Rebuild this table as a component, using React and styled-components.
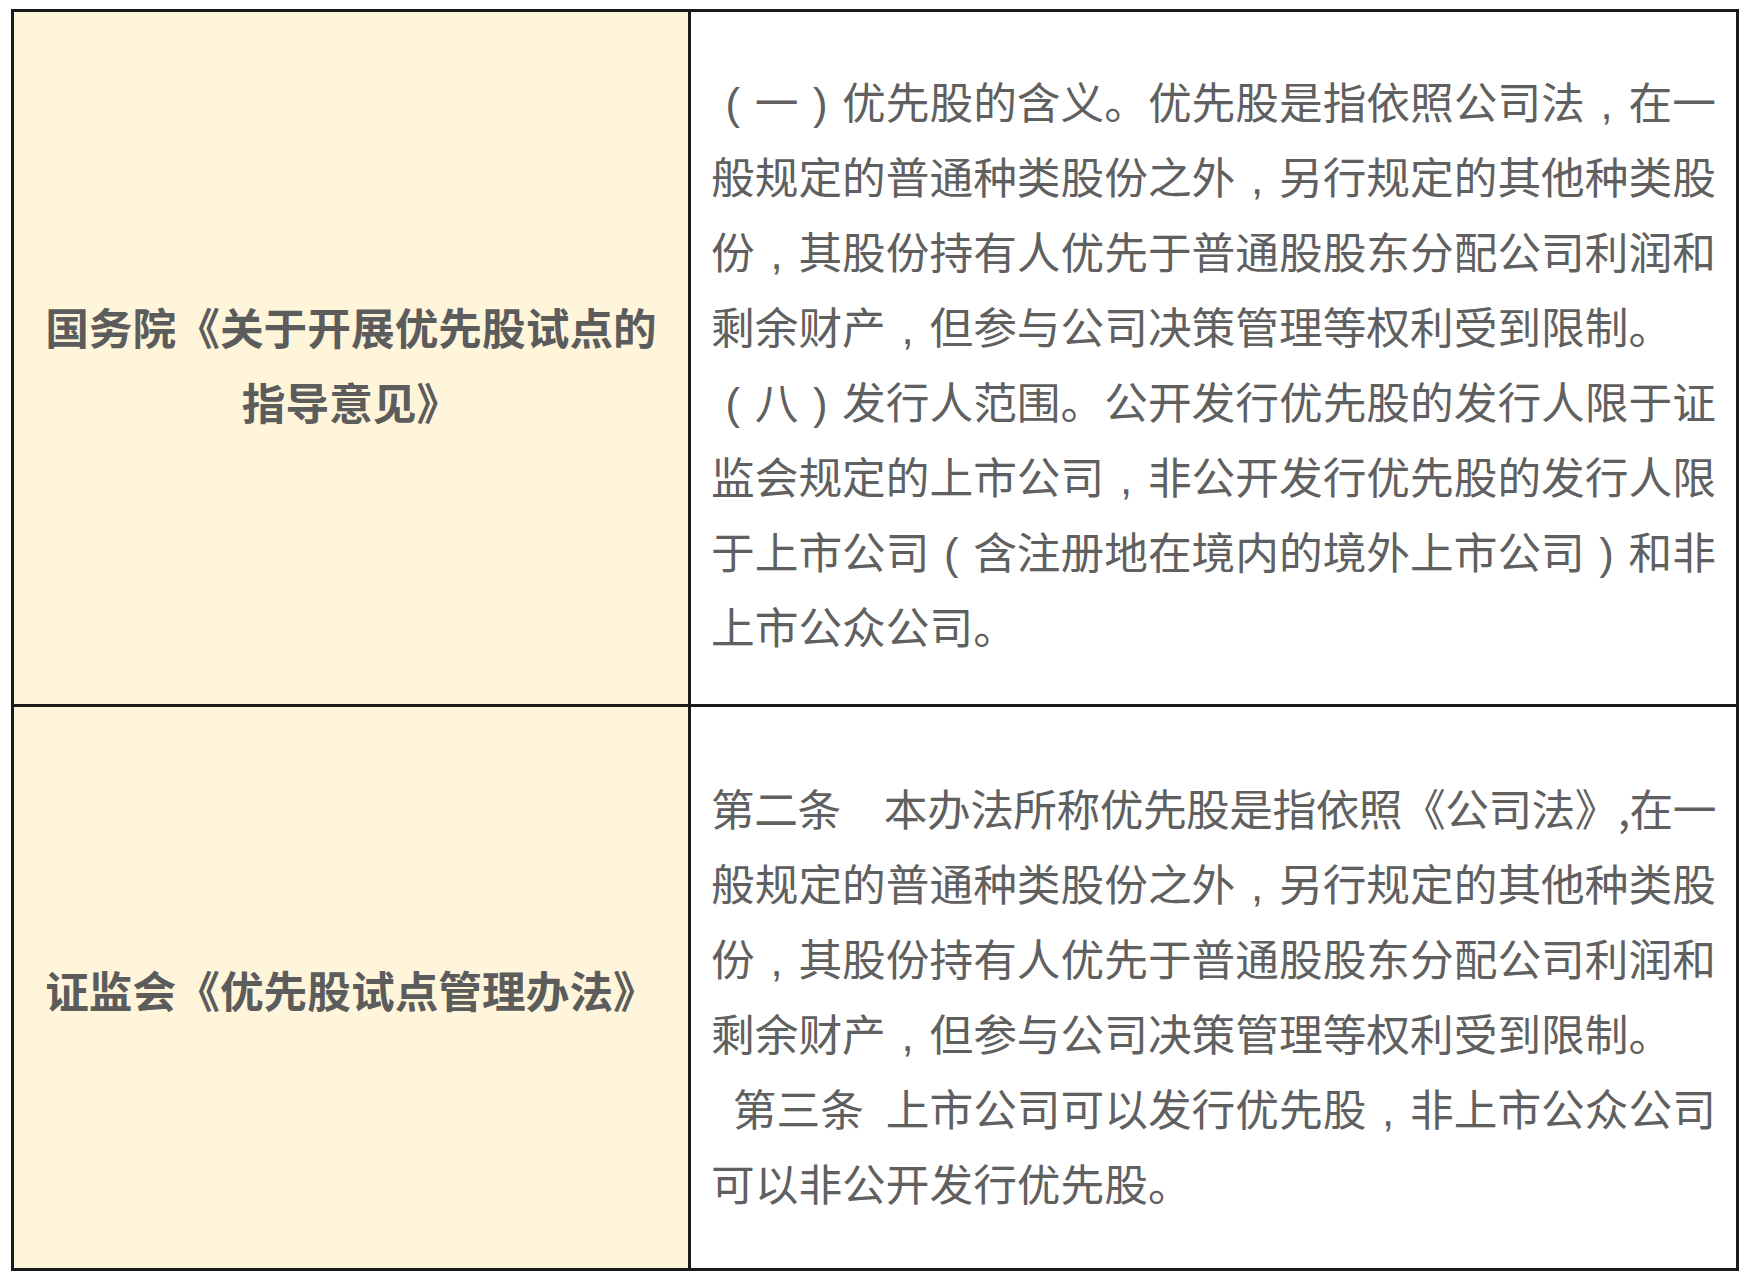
import React from 'react'
import styled, { createGlobalStyle } from 'styled-components'

const GlobalStyle = createGlobalStyle`
    html, body {
        margin: 0;
        padding: 0;
        background: #ffffff;
    }
    body {
        font-family: "Noto Sans CJK SC", "Noto Sans", sans-serif;
    }
`

const Page = styled.div`
    padding: 9px 0 0 11px;
`

const Table = styled.div`
    display: grid;
    grid-template-columns: 674px 1045px;
    grid-template-rows: 692px 561px;
    gap: 3px;
    padding: 3px;
    width: max-content;
    background: #1b1b1b;
`

const HeadCell = styled.div`
    display: flex;
    flex-direction: column;
    align-items: center;
    justify-content: center;
    padding-top: ${props => props.$offset}px;
    background: #fff5da;
    color: #5c5c5c;
    font-size: 43.7px;
    font-weight: 700;
    line-height: 75px;
    text-align: center;
`

const TextCell = styled.div`
    display: flex;
    flex-direction: column;
    justify-content: center;
    padding: ${props => props.$offset}px 0 0 20px;
    background: #ffffff;
    color: #606060;
    font-size: 43.7px;
    font-weight: 400;
    line-height: 75px;
`

const Line = styled.div`
    height: 75px;
    white-space: pre;
    letter-spacing: ${props => props.$tight ? '-0.5px' : '0'};
`

// full-width comma and brackets sit in the middle of their cell
const Punct = styled.span`
    display: inline-block;
    width: 1em;
    line-height: 0;
    text-align: center;
    font-family: "Liberation Sans", "Noto Sans", sans-serif;
    font-weight: 400;
`

const punctMap = { '，': ',', '（': '(', '）': ')' }

function renderLine(text) {
    return text.split(/([，（）])/).map((part, i) =>
        punctMap[part] ? <Punct key={i}>{punctMap[part]}</Punct> : part
    )
}

const rows = [
    {
        head: ['国务院《关于开展优先股试点的', '指导意见》'],
        headOffset: 12,
        textOffset: 9,
        lines: [
            '（一）优先股的含义。优先股是指依照公司法，在一',
            '般规定的普通种类股份之外，另行规定的其他种类股',
            '份，其股份持有人优先于普通股股东分配公司利润和',
            '剩余财产，但参与公司决策管理等权利受到限制。',
            '（八）发行人范围。公开发行优先股的发行人限于证',
            '监会规定的上市公司，非公开发行优先股的发行人限',
            '于上市公司（含注册地在境内的境外上市公司）和非',
            '上市公众公司。',
        ],
    },
    {
        head: ['证监会《优先股试点管理办法》'],
        headOffset: 3,
        textOffset: 14,
        lines: [
            '第二条\u3000本办法所称优先股是指依照《公司法》,在一',
            '般规定的普通种类股份之外，另行规定的其他种类股',
            '份，其股份持有人优先于普通股股东分配公司利润和',
            '剩余财产，但参与公司决策管理等权利受到限制。',
            '\u2002第三条\u2002上市公司可以发行优先股，非上市公众公司',
            '可以非公开发行优先股。',
        ],
    },
]

function App() {
    return (
        <Page>
            <GlobalStyle />
            <Table>
                {rows.map((row, i) => (
                    <React.Fragment key={i}>
                        <HeadCell $offset={row.headOffset}>
                            {row.head.map((h, j) => (
                                <Line key={j}>{h}</Line>
                            ))}
                        </HeadCell>
                        <TextCell $offset={row.textOffset}>
                            {row.lines.map((l, j) => (
                                <Line key={j} $tight={l.includes('》,')}>
                                    {renderLine(l)}
                                </Line>
                            ))}
                        </TextCell>
                    </React.Fragment>
                ))}
            </Table>
        </Page>
    )
}

export default App
